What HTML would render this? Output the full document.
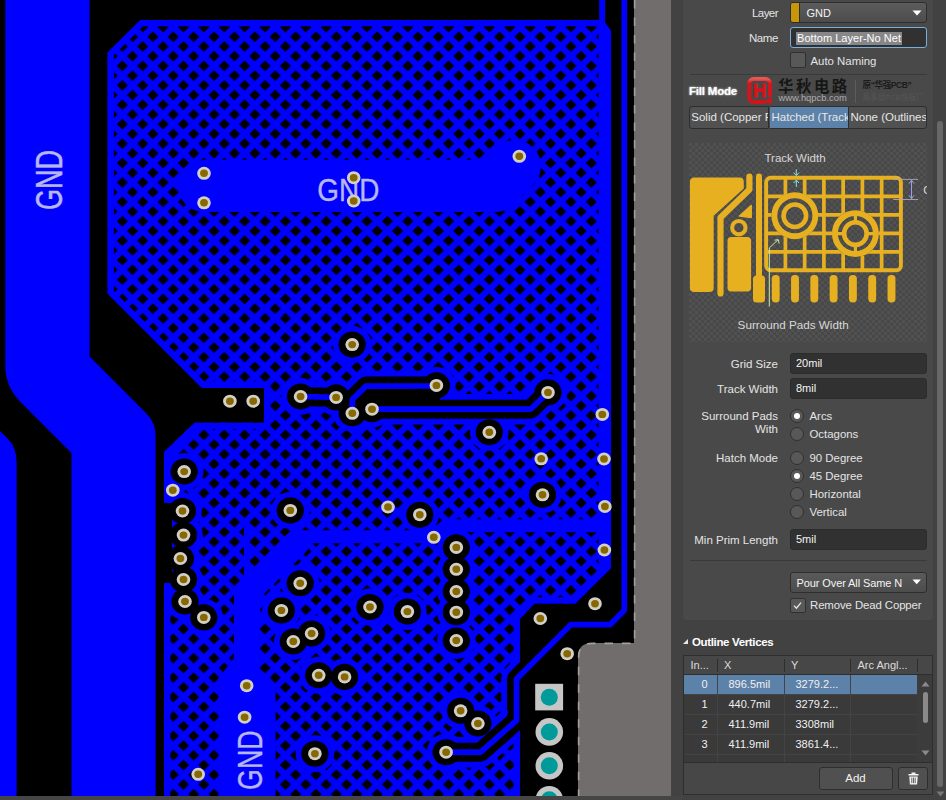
<!DOCTYPE html>
<html lang="zh"><head><meta charset="utf-8"><title>Polygon Pour Properties</title>
<style>
html,body{margin:0;padding:0}
body{width:946px;height:800px;overflow:hidden;background:#424242;position:relative;font-family:"Liberation Sans","Noto Sans CJK SC",sans-serif;font-size:11px;color:#e4e4e4}
.abs{position:absolute;white-space:nowrap}
.sec{position:absolute;left:683px;top:0;width:250px;height:620px;background:#494949;border-radius:0 0 4px 4px}
.lbl{position:absolute;white-space:nowrap;text-align:right;width:120px;left:658px;height:14px;line-height:14px;font-size:11.5px}
.inp{position:absolute;left:790px;width:137px;height:20.5px;background:#313131;border-radius:3px;box-sizing:border-box;border:1px solid #2c2c2c;line-height:19.6px;padding-left:5px;color:#f4f4f4}
.radio{position:absolute;width:12px;height:12px;border-radius:50%;background:#585858;border:1px solid #303030;left:790px}
.radio.on::after{content:"";position:absolute;left:3px;top:3px;width:6px;height:6px;border-radius:50%;background:#fff}
.rl{position:absolute;left:809.5px;white-space:nowrap;height:14px;line-height:14px;font-size:11.4px}
.chk{position:absolute;left:790.3px;width:13.4px;height:13.4px;background:#585858;border:1px solid #303030;border-radius:2px}
.hr{position:absolute;left:689.5px;width:237px;height:1px;background:#3a3a3a}
.seg{position:absolute;top:106px;height:22.5px;box-sizing:border-box;line-height:21px;overflow:hidden;white-space:nowrap;padding-left:2px;color:#e6e6e6;font-size:11.5px}
.th{position:absolute;top:0;height:19px;line-height:19px;color:#dcdcdc}
.vs{position:absolute;top:3px;width:1px;height:13px;background:#2e2e2e}
.row{position:absolute;left:0;width:233.4px;height:20px;background:#3a3a3a;border-bottom:1px solid #434343;box-sizing:border-box}
.row.sel{background:#5d82a9}
.cell{position:absolute;top:0;height:19px;line-height:19px;color:#f0f0f0;white-space:nowrap}
.cs{position:absolute;top:0;width:1px;height:20px;background:#444}
.btn{position:absolute;top:767px;height:23px;box-sizing:border-box;border:1px solid #2e2e2e;border-radius:3px;background:#505050;text-align:center;line-height:21px;color:#f2f2f2}
</style></head>
<body>
<svg id="pcb" width="683" height="800" viewBox="0 0 683 800" style="position:absolute;left:0;top:0">
<defs>
<pattern id="hatch" x="152.9" y="36.8" width="20.39" height="19.42" patternUnits="userSpaceOnUse"><rect width="20.39" height="19.42" fill="#0000ff"/><path d="M-5.60 0.00 L0.00 -5.30 L5.60 0.00 L0.00 5.30 Z M14.79 0.00 L20.39 -5.30 L25.99 0.00 L20.39 5.30 Z M-5.60 19.42 L0.00 14.12 L5.60 19.42 L0.00 24.72 Z M14.79 19.42 L20.39 14.12 L25.99 19.42 L20.39 24.72 Z M4.60 9.71 L10.20 4.41 L15.79 9.71 L10.20 15.01 Z" fill="#000"/></pattern>
<clipPath id="pc"><path d="M140.4 20.0 L603.0 20.0 L611.0 31.0 L611.0 568.0 L575.5 603.5 L534.5 603.5 L520.0 619.0 L520.0 812.0 L164.0 812.0 L164.0 452.0 L194.4 422.8 L264.0 422.8 L264.0 388.0 L202.0 388.0 L107.6 293.6 L107.6 52.4 Z"/></clipPath>
</defs>
<rect width="683" height="800" fill="#000"/>
<path d="M634 0 L671 0 L671 800 L578 800 L578 657 Q578 643 592 643 L634 643 Z" fill="#716d6c"/>
<path d="M634.6 0 L634.6 643.4 L592 643.4 Q578.6 643.4 578.6 657 L578.6 800" fill="none" stroke="#a3a1a0" stroke-width="1.6" stroke-dasharray="8.5 9"/>
<rect x="671" y="0" width="12" height="800" fill="#424242"/>
<path d="M5.3 0 L89.6 0 L89.6 356.6 L146 413 Q155.6 422.6 155.6 436 L155.6 796 L71.5 796 L71.5 453 L21 402.5 Q5.3 386.8 5.3 366 Z" fill="#0000ff"/>
<path d="M0 431 L8 439 Q16.6 447.6 16.6 462 L16.6 796 L0 796 Z" fill="#0000ff"/>
<rect x="599.2" y="0" width="5.9" height="24" fill="#0000ff"/>
<path d="M140.4 20.0 L603.0 20.0 L611.0 31.0 L611.0 568.0 L575.5 603.5 L534.5 603.5 L520.0 619.0 L520.0 812.0 L164.0 812.0 L164.0 452.0 L194.4 422.8 L264.0 422.8 L264.0 388.0 L202.0 388.0 L107.6 293.6 L107.6 52.4 Z" fill="url(#hatch)"/>
<g clip-path="url(#pc)">
<path d="M140.4 20.0 L603.0 20.0 L611.0 31.0 L611.0 568.0 L575.5 603.5 L534.5 603.5 L520.0 619.0 L520.0 812.0 L164.0 812.0 L164.0 452.0 L194.4 422.8 L264.0 422.8 L264.0 388.0 L202.0 388.0 L107.6 293.6 L107.6 52.4 Z" fill="none" stroke="#0000ff" stroke-width="12.6" stroke-linejoin="miter"/>
<rect x="598.6" y="20" width="13" height="560" fill="#0000ff"/>
<path d="M204 186 L495 186 L515 166" fill="none" stroke="#0000ff" stroke-width="52" stroke-linecap="round" stroke-linejoin="round"/>
<path d="M291 536.8 L433 536.8 L446 525.7 L604 525.7" fill="none" stroke="#0000ff" stroke-width="13" stroke-linejoin="round"/>
<path d="M247 690 L247 592.5 L296.5 543" fill="none" stroke="#0000ff" stroke-width="26" stroke-linejoin="round" stroke-linecap="round"/>
<path d="M247 527 L247 590" fill="none" stroke="#0000ff" stroke-width="6"/>
<path d="M234 658 L218.5 678 L218.5 800 L275.6 800 L275.6 692 L259.5 668 Z" fill="#0000ff"/>
<circle cx="172.8" cy="490.2" r="12" fill="#0000ff"/>
<ellipse cx="352.2" cy="344.6" rx="19.3" ry="18.5" fill="#0000ff"/>
<ellipse cx="300.6" cy="396.5" rx="19.3" ry="18.5" fill="#0000ff"/>
<ellipse cx="336.1" cy="397.4" rx="19.3" ry="18.5" fill="#0000ff"/>
<ellipse cx="352.3" cy="413.3" rx="19.3" ry="18.5" fill="#0000ff"/>
<ellipse cx="372" cy="409.2" rx="19.3" ry="18.5" fill="#0000ff"/>
<ellipse cx="436.4" cy="385.4" rx="19.3" ry="18.5" fill="#0000ff"/>
<ellipse cx="548" cy="392.4" rx="19.3" ry="18.5" fill="#0000ff"/>
<ellipse cx="489.3" cy="432.3" rx="19.3" ry="18.5" fill="#0000ff"/>
<ellipse cx="542.5" cy="494.8" rx="19.3" ry="18.5" fill="#0000ff"/>
<ellipse cx="184.2" cy="471.6" rx="19.3" ry="18.5" fill="#0000ff"/>
<ellipse cx="182.5" cy="511" rx="19.3" ry="18.5" fill="#0000ff"/>
<ellipse cx="183.5" cy="535.1" rx="19.3" ry="18.5" fill="#0000ff"/>
<ellipse cx="180.4" cy="558.5" rx="19.3" ry="18.5" fill="#0000ff"/>
<ellipse cx="183.5" cy="579.5" rx="19.3" ry="18.5" fill="#0000ff"/>
<ellipse cx="185" cy="601.5" rx="19.3" ry="18.5" fill="#0000ff"/>
<ellipse cx="203.8" cy="617.4" rx="19.3" ry="18.5" fill="#0000ff"/>
<ellipse cx="290.3" cy="510.4" rx="19.3" ry="18.5" fill="#0000ff"/>
<ellipse cx="300.2" cy="583.3" rx="19.3" ry="18.5" fill="#0000ff"/>
<ellipse cx="281.4" cy="610.4" rx="19.3" ry="18.5" fill="#0000ff"/>
<ellipse cx="370" cy="607" rx="19.3" ry="18.5" fill="#0000ff"/>
<ellipse cx="311.6" cy="633.5" rx="19.3" ry="18.5" fill="#0000ff"/>
<ellipse cx="293.3" cy="641.5" rx="19.3" ry="18.5" fill="#0000ff"/>
<ellipse cx="318.7" cy="675.3" rx="19.3" ry="18.5" fill="#0000ff"/>
<ellipse cx="344.6" cy="676.9" rx="19.3" ry="18.5" fill="#0000ff"/>
<ellipse cx="314.9" cy="753.7" rx="19.3" ry="18.5" fill="#0000ff"/>
<ellipse cx="419.8" cy="514.7" rx="19.3" ry="18.5" fill="#0000ff"/>
<ellipse cx="407.4" cy="611.6" rx="19.3" ry="18.5" fill="#0000ff"/>
<ellipse cx="456.3" cy="547.4" rx="19.3" ry="18.5" fill="#0000ff"/>
<ellipse cx="456.3" cy="569.3" rx="19.3" ry="18.5" fill="#0000ff"/>
<ellipse cx="456.3" cy="591.5" rx="19.3" ry="18.5" fill="#0000ff"/>
<ellipse cx="456.3" cy="612.2" rx="19.3" ry="18.5" fill="#0000ff"/>
<ellipse cx="456.3" cy="640.5" rx="19.3" ry="18.5" fill="#0000ff"/>
<ellipse cx="460.6" cy="710.8" rx="19.3" ry="18.5" fill="#0000ff"/>
<ellipse cx="477.9" cy="723.5" rx="19.3" ry="18.5" fill="#0000ff"/>
<ellipse cx="446.1" cy="752.2" rx="19.3" ry="18.5" fill="#0000ff"/>
<path d="M300.6 396.5 L336.1 397.4" fill="none" stroke="#0000ff" stroke-width="30.4" stroke-linecap="round" stroke-linejoin="round"/>
<path d="M352.3 413.3 L352.3 399.5 L366.0 386.1 L436.4 386.0" fill="none" stroke="#0000ff" stroke-width="30.4" stroke-linecap="round" stroke-linejoin="round"/>
<path d="M372.0 409.2 L530.6 409.2 L548.0 392.4" fill="none" stroke="#0000ff" stroke-width="30.4" stroke-linecap="round" stroke-linejoin="round"/>
<path d="M446.1 752.2 L480.6 752.2 L516.5 720.5 L516.5 679.0 L570.7 624.7 L610.0 624.7 L624.3 610.3 L624.3 -5.0" fill="none" stroke="#0000ff" stroke-width="30.4" stroke-linecap="round" stroke-linejoin="round"/>
<rect x="160" y="503" width="12" height="80" fill="#000"/>
<path d="M367 385 L440 385 L440 409 L372 409 L355 405 Z" fill="#000"/>
<ellipse cx="352.2" cy="344.6" rx="13.6" ry="13.05" fill="#000"/>
<ellipse cx="300.6" cy="396.5" rx="13.6" ry="13.05" fill="#000"/>
<ellipse cx="336.1" cy="397.4" rx="13.6" ry="13.05" fill="#000"/>
<ellipse cx="352.3" cy="413.3" rx="13.6" ry="13.05" fill="#000"/>
<ellipse cx="372" cy="409.2" rx="13.6" ry="13.05" fill="#000"/>
<ellipse cx="436.4" cy="385.4" rx="13.6" ry="13.05" fill="#000"/>
<ellipse cx="548" cy="392.4" rx="13.6" ry="13.05" fill="#000"/>
<ellipse cx="489.3" cy="432.3" rx="13.6" ry="13.05" fill="#000"/>
<ellipse cx="542.5" cy="494.8" rx="13.6" ry="13.05" fill="#000"/>
<ellipse cx="184.2" cy="471.6" rx="13.6" ry="13.05" fill="#000"/>
<ellipse cx="182.5" cy="511" rx="13.6" ry="13.05" fill="#000"/>
<ellipse cx="183.5" cy="535.1" rx="13.6" ry="13.05" fill="#000"/>
<ellipse cx="180.4" cy="558.5" rx="13.6" ry="13.05" fill="#000"/>
<ellipse cx="183.5" cy="579.5" rx="13.6" ry="13.05" fill="#000"/>
<ellipse cx="185" cy="601.5" rx="13.6" ry="13.05" fill="#000"/>
<ellipse cx="203.8" cy="617.4" rx="13.6" ry="13.05" fill="#000"/>
<ellipse cx="290.3" cy="510.4" rx="13.6" ry="13.05" fill="#000"/>
<ellipse cx="300.2" cy="583.3" rx="13.6" ry="13.05" fill="#000"/>
<ellipse cx="281.4" cy="610.4" rx="13.6" ry="13.05" fill="#000"/>
<ellipse cx="370" cy="607" rx="13.6" ry="13.05" fill="#000"/>
<ellipse cx="311.6" cy="633.5" rx="13.6" ry="13.05" fill="#000"/>
<ellipse cx="293.3" cy="641.5" rx="13.6" ry="13.05" fill="#000"/>
<ellipse cx="318.7" cy="675.3" rx="13.6" ry="13.05" fill="#000"/>
<ellipse cx="344.6" cy="676.9" rx="13.6" ry="13.05" fill="#000"/>
<ellipse cx="314.9" cy="753.7" rx="13.6" ry="13.05" fill="#000"/>
<ellipse cx="419.8" cy="514.7" rx="13.6" ry="13.05" fill="#000"/>
<ellipse cx="407.4" cy="611.6" rx="13.6" ry="13.05" fill="#000"/>
<ellipse cx="456.3" cy="547.4" rx="13.6" ry="13.05" fill="#000"/>
<ellipse cx="456.3" cy="569.3" rx="13.6" ry="13.05" fill="#000"/>
<ellipse cx="456.3" cy="591.5" rx="13.6" ry="13.05" fill="#000"/>
<ellipse cx="456.3" cy="612.2" rx="13.6" ry="13.05" fill="#000"/>
<ellipse cx="456.3" cy="640.5" rx="13.6" ry="13.05" fill="#000"/>
<ellipse cx="460.6" cy="710.8" rx="13.6" ry="13.05" fill="#000"/>
<ellipse cx="477.9" cy="723.5" rx="13.6" ry="13.05" fill="#000"/>
<ellipse cx="446.1" cy="752.2" rx="13.6" ry="13.05" fill="#000"/>
<path d="M300.6 396.5 L336.1 397.4" fill="none" stroke="#000" stroke-width="19" stroke-linecap="round" stroke-linejoin="round"/>
<path d="M352.3 413.3 L352.3 399.5 L366.0 386.1 L436.4 386.0" fill="none" stroke="#000" stroke-width="19" stroke-linecap="round" stroke-linejoin="round"/>
<path d="M372.0 409.2 L530.6 409.2 L548.0 392.4" fill="none" stroke="#000" stroke-width="19" stroke-linecap="round" stroke-linejoin="round"/>
<path d="M446.1 752.2 L480.6 752.2 L516.5 720.5 L516.5 679.0 L570.7 624.7 L610.0 624.7 L624.3 610.3 L624.3 -5.0" fill="none" stroke="#000" stroke-width="19" stroke-linecap="round" stroke-linejoin="round"/>
</g>
<path d="M300.6 396.5 L336.1 397.4" fill="none" stroke="#0000ff" stroke-width="5.7" stroke-linecap="round" stroke-linejoin="round"/>
<path d="M352.3 413.3 L352.3 399.5 L366.0 386.1 L436.4 386.0" fill="none" stroke="#0000ff" stroke-width="5.7" stroke-linecap="round" stroke-linejoin="round"/>
<path d="M372.0 409.2 L530.6 409.2 L548.0 392.4" fill="none" stroke="#0000ff" stroke-width="5.7" stroke-linecap="round" stroke-linejoin="round"/>
<path d="M446.1 752.2 L480.6 752.2 L516.5 720.5 L516.5 679.0 L570.7 624.7 L610.0 624.7 L624.3 610.3 L624.3 -5.0" fill="none" stroke="#0000ff" stroke-width="5.7" stroke-linecap="round" stroke-linejoin="round"/>
<text x="348.3" y="200.6" font-family="Liberation Sans, sans-serif" font-size="31.6" fill="#b6b6f2" stroke="#b6b6f2" stroke-width="0.4" text-anchor="middle" textLength="62" lengthAdjust="spacingAndGlyphs">GND</text>
<text transform="translate(61.8 180) rotate(-90)" font-family="Liberation Sans, sans-serif" font-size="37.2" fill="#b6b6f2" stroke="#b6b6f2" stroke-width="0.5" text-anchor="middle" textLength="60" lengthAdjust="spacingAndGlyphs">GND</text>
<text transform="translate(261.8 760.2) rotate(-90)" font-family="Liberation Sans, sans-serif" font-size="35.6" fill="#b6b6f2" stroke="#b6b6f2" stroke-width="0.4" text-anchor="middle" textLength="59.5" lengthAdjust="spacingAndGlyphs">GND</text>
<path d="M495.3 721.2 L505.2 712.4" stroke="#0000ff" stroke-width="5.6" stroke-linecap="round"/>
<ellipse cx="204" cy="173.3" rx="6.8" ry="6.5" fill="#d1cfc7"/><ellipse cx="204" cy="173.3" rx="3.9" ry="3.7" fill="#876700"/>
<ellipse cx="204" cy="202.8" rx="6.8" ry="6.5" fill="#d1cfc7"/><ellipse cx="204" cy="202.8" rx="3.9" ry="3.7" fill="#876700"/>
<ellipse cx="353.7" cy="177.7" rx="6.8" ry="6.5" fill="#d1cfc7"/><ellipse cx="353.7" cy="177.7" rx="3.9" ry="3.7" fill="#876700"/>
<ellipse cx="353.7" cy="201" rx="6.8" ry="6.5" fill="#d1cfc7"/><ellipse cx="353.7" cy="201" rx="3.9" ry="3.7" fill="#876700"/>
<ellipse cx="519.3" cy="156.3" rx="6.8" ry="6.5" fill="#d1cfc7"/><ellipse cx="519.3" cy="156.3" rx="3.9" ry="3.7" fill="#876700"/>
<ellipse cx="229.9" cy="401.2" rx="6.8" ry="6.5" fill="#d1cfc7"/><ellipse cx="229.9" cy="401.2" rx="3.9" ry="3.7" fill="#876700"/>
<ellipse cx="253.2" cy="401.2" rx="6.8" ry="6.5" fill="#d1cfc7"/><ellipse cx="253.2" cy="401.2" rx="3.9" ry="3.7" fill="#876700"/>
<ellipse cx="352.2" cy="344.6" rx="6.8" ry="6.5" fill="#d1cfc7"/><ellipse cx="352.2" cy="344.6" rx="3.9" ry="3.7" fill="#876700"/>
<ellipse cx="300.6" cy="396.5" rx="6.8" ry="6.5" fill="#d1cfc7"/><ellipse cx="300.6" cy="396.5" rx="3.9" ry="3.7" fill="#876700"/>
<ellipse cx="336.1" cy="397.4" rx="6.8" ry="6.5" fill="#d1cfc7"/><ellipse cx="336.1" cy="397.4" rx="3.9" ry="3.7" fill="#876700"/>
<ellipse cx="352.3" cy="413.3" rx="6.8" ry="6.5" fill="#d1cfc7"/><ellipse cx="352.3" cy="413.3" rx="3.9" ry="3.7" fill="#876700"/>
<ellipse cx="372" cy="409.2" rx="6.8" ry="6.5" fill="#d1cfc7"/><ellipse cx="372" cy="409.2" rx="3.9" ry="3.7" fill="#876700"/>
<ellipse cx="436.4" cy="385.4" rx="6.8" ry="6.5" fill="#d1cfc7"/><ellipse cx="436.4" cy="385.4" rx="3.9" ry="3.7" fill="#876700"/>
<ellipse cx="548" cy="392.4" rx="6.8" ry="6.5" fill="#d1cfc7"/><ellipse cx="548" cy="392.4" rx="3.9" ry="3.7" fill="#876700"/>
<ellipse cx="489.3" cy="432.3" rx="6.8" ry="6.5" fill="#d1cfc7"/><ellipse cx="489.3" cy="432.3" rx="3.9" ry="3.7" fill="#876700"/>
<ellipse cx="541.2" cy="458.8" rx="6.8" ry="6.5" fill="#d1cfc7"/><ellipse cx="541.2" cy="458.8" rx="3.9" ry="3.7" fill="#876700"/>
<ellipse cx="602.3" cy="414.4" rx="6.8" ry="6.5" fill="#d1cfc7"/><ellipse cx="602.3" cy="414.4" rx="3.9" ry="3.7" fill="#876700"/>
<ellipse cx="604" cy="459" rx="6.8" ry="6.5" fill="#d1cfc7"/><ellipse cx="604" cy="459" rx="3.9" ry="3.7" fill="#876700"/>
<ellipse cx="604.9" cy="506.5" rx="6.8" ry="6.5" fill="#d1cfc7"/><ellipse cx="604.9" cy="506.5" rx="3.9" ry="3.7" fill="#876700"/>
<ellipse cx="604.4" cy="550" rx="6.8" ry="6.5" fill="#d1cfc7"/><ellipse cx="604.4" cy="550" rx="3.9" ry="3.7" fill="#876700"/>
<ellipse cx="542.5" cy="494.8" rx="6.8" ry="6.5" fill="#d1cfc7"/><ellipse cx="542.5" cy="494.8" rx="3.9" ry="3.7" fill="#876700"/>
<ellipse cx="184.2" cy="471.6" rx="6.8" ry="6.5" fill="#d1cfc7"/><ellipse cx="184.2" cy="471.6" rx="3.9" ry="3.7" fill="#876700"/>
<ellipse cx="172.8" cy="490.2" rx="6.8" ry="6.5" fill="#d1cfc7"/><ellipse cx="172.8" cy="490.2" rx="3.9" ry="3.7" fill="#876700"/>
<ellipse cx="182.5" cy="511" rx="6.8" ry="6.5" fill="#d1cfc7"/><ellipse cx="182.5" cy="511" rx="3.9" ry="3.7" fill="#876700"/>
<ellipse cx="183.5" cy="535.1" rx="6.8" ry="6.5" fill="#d1cfc7"/><ellipse cx="183.5" cy="535.1" rx="3.9" ry="3.7" fill="#876700"/>
<ellipse cx="180.4" cy="558.5" rx="6.8" ry="6.5" fill="#d1cfc7"/><ellipse cx="180.4" cy="558.5" rx="3.9" ry="3.7" fill="#876700"/>
<ellipse cx="183.5" cy="579.5" rx="6.8" ry="6.5" fill="#d1cfc7"/><ellipse cx="183.5" cy="579.5" rx="3.9" ry="3.7" fill="#876700"/>
<ellipse cx="185" cy="601.5" rx="6.8" ry="6.5" fill="#d1cfc7"/><ellipse cx="185" cy="601.5" rx="3.9" ry="3.7" fill="#876700"/>
<ellipse cx="203.8" cy="617.4" rx="6.8" ry="6.5" fill="#d1cfc7"/><ellipse cx="203.8" cy="617.4" rx="3.9" ry="3.7" fill="#876700"/>
<ellipse cx="290.3" cy="510.4" rx="6.8" ry="6.5" fill="#d1cfc7"/><ellipse cx="290.3" cy="510.4" rx="3.9" ry="3.7" fill="#876700"/>
<ellipse cx="300.2" cy="583.3" rx="6.8" ry="6.5" fill="#d1cfc7"/><ellipse cx="300.2" cy="583.3" rx="3.9" ry="3.7" fill="#876700"/>
<ellipse cx="281.4" cy="610.4" rx="6.8" ry="6.5" fill="#d1cfc7"/><ellipse cx="281.4" cy="610.4" rx="3.9" ry="3.7" fill="#876700"/>
<ellipse cx="370" cy="607" rx="6.8" ry="6.5" fill="#d1cfc7"/><ellipse cx="370" cy="607" rx="3.9" ry="3.7" fill="#876700"/>
<ellipse cx="311.6" cy="633.5" rx="6.8" ry="6.5" fill="#d1cfc7"/><ellipse cx="311.6" cy="633.5" rx="3.9" ry="3.7" fill="#876700"/>
<ellipse cx="293.3" cy="641.5" rx="6.8" ry="6.5" fill="#d1cfc7"/><ellipse cx="293.3" cy="641.5" rx="3.9" ry="3.7" fill="#876700"/>
<ellipse cx="318.7" cy="675.3" rx="6.8" ry="6.5" fill="#d1cfc7"/><ellipse cx="318.7" cy="675.3" rx="3.9" ry="3.7" fill="#876700"/>
<ellipse cx="344.6" cy="676.9" rx="6.8" ry="6.5" fill="#d1cfc7"/><ellipse cx="344.6" cy="676.9" rx="3.9" ry="3.7" fill="#876700"/>
<ellipse cx="246.7" cy="685.7" rx="6.8" ry="6.5" fill="#d1cfc7"/><ellipse cx="246.7" cy="685.7" rx="3.9" ry="3.7" fill="#876700"/>
<ellipse cx="244.6" cy="717.2" rx="6.8" ry="6.5" fill="#d1cfc7"/><ellipse cx="244.6" cy="717.2" rx="3.9" ry="3.7" fill="#876700"/>
<ellipse cx="314.9" cy="753.7" rx="6.8" ry="6.5" fill="#d1cfc7"/><ellipse cx="314.9" cy="753.7" rx="3.9" ry="3.7" fill="#876700"/>
<ellipse cx="198.2" cy="774.3" rx="6.8" ry="6.5" fill="#d1cfc7"/><ellipse cx="198.2" cy="774.3" rx="3.9" ry="3.7" fill="#876700"/>
<ellipse cx="388" cy="507" rx="6.8" ry="6.5" fill="#d1cfc7"/><ellipse cx="388" cy="507" rx="3.9" ry="3.7" fill="#876700"/>
<ellipse cx="419.8" cy="514.7" rx="6.8" ry="6.5" fill="#d1cfc7"/><ellipse cx="419.8" cy="514.7" rx="3.9" ry="3.7" fill="#876700"/>
<ellipse cx="433.8" cy="537.3" rx="6.8" ry="6.5" fill="#d1cfc7"/><ellipse cx="433.8" cy="537.3" rx="3.9" ry="3.7" fill="#876700"/>
<ellipse cx="407.4" cy="611.6" rx="6.8" ry="6.5" fill="#d1cfc7"/><ellipse cx="407.4" cy="611.6" rx="3.9" ry="3.7" fill="#876700"/>
<ellipse cx="456.3" cy="547.4" rx="6.8" ry="6.5" fill="#d1cfc7"/><ellipse cx="456.3" cy="547.4" rx="3.9" ry="3.7" fill="#876700"/>
<ellipse cx="456.3" cy="569.3" rx="6.8" ry="6.5" fill="#d1cfc7"/><ellipse cx="456.3" cy="569.3" rx="3.9" ry="3.7" fill="#876700"/>
<ellipse cx="456.3" cy="591.5" rx="6.8" ry="6.5" fill="#d1cfc7"/><ellipse cx="456.3" cy="591.5" rx="3.9" ry="3.7" fill="#876700"/>
<ellipse cx="456.3" cy="612.2" rx="6.8" ry="6.5" fill="#d1cfc7"/><ellipse cx="456.3" cy="612.2" rx="3.9" ry="3.7" fill="#876700"/>
<ellipse cx="456.3" cy="640.5" rx="6.8" ry="6.5" fill="#d1cfc7"/><ellipse cx="456.3" cy="640.5" rx="3.9" ry="3.7" fill="#876700"/>
<ellipse cx="460.6" cy="710.8" rx="6.8" ry="6.5" fill="#d1cfc7"/><ellipse cx="460.6" cy="710.8" rx="3.9" ry="3.7" fill="#876700"/>
<ellipse cx="477.9" cy="723.5" rx="6.8" ry="6.5" fill="#d1cfc7"/><ellipse cx="477.9" cy="723.5" rx="3.9" ry="3.7" fill="#876700"/>
<ellipse cx="446.1" cy="752.2" rx="6.8" ry="6.5" fill="#d1cfc7"/><ellipse cx="446.1" cy="752.2" rx="3.9" ry="3.7" fill="#876700"/>
<ellipse cx="540.3" cy="618.5" rx="6.8" ry="6.5" fill="#d1cfc7"/><ellipse cx="540.3" cy="618.5" rx="3.9" ry="3.7" fill="#876700"/>
<ellipse cx="595" cy="603.7" rx="6.8" ry="6.5" fill="#d1cfc7"/><ellipse cx="595" cy="603.7" rx="3.9" ry="3.7" fill="#876700"/>
<ellipse cx="567.2" cy="653.7" rx="6.8" ry="6.5" fill="#d1cfc7"/><ellipse cx="567.2" cy="653.7" rx="3.9" ry="3.7" fill="#876700"/>
<rect x="535.2" y="683.8" width="27.9" height="26.6" fill="#c6c6c6"/>
<circle cx="549.3" cy="697.3" r="8.5" fill="#009a9a"/>
<circle cx="549.3" cy="731.9" r="13.8" fill="#c6c6c6"/><circle cx="549.3" cy="731.9" r="8.5" fill="#009a9a"/>
<circle cx="549.3" cy="765.8" r="13.8" fill="#c6c6c6"/><circle cx="549.3" cy="765.8" r="8.5" fill="#009a9a"/>
<circle cx="549.3" cy="799.8" r="13.8" fill="#c6c6c6"/><circle cx="549.3" cy="799.8" r="8.5" fill="#009a9a"/>
<rect x="0" y="796" width="683" height="4" fill="#454545"/>
</svg>
<div class="sec"></div>
<div class="lbl" style="top:6px;letter-spacing:-0.55px">Layer</div>
<div class="abs" style="left:790px;top:2px;width:137px;height:21px;box-sizing:border-box;border:1px solid #2e2e2e;border-radius:3px;background:linear-gradient(#5c5c5c,#4c4c4c);overflow:hidden"><div style="position:absolute;left:0;top:0;width:8px;height:100%;background:#c8960a;border-right:1px solid #2e2e2e"></div><span style="position:absolute;left:15.5px;top:2.5px;line-height:14px;color:#f4f4f4">GND</span><svg style="position:absolute;left:121px;top:6.5px" width="10" height="6" viewBox="0 0 10 6"><path d="M0.5 0.5 L9.5 0.5 L5 5.5 Z" fill="#fff"/></svg></div>
<div class="lbl" style="top:30.5px;letter-spacing:-0.4px">Name</div>
<div class="abs" style="left:790px;top:27px;width:137px;height:21px;box-sizing:border-box;border:1px solid #79aee0;border-radius:3px;background:#313131"><span style="position:absolute;left:5px;top:4px;height:12.5px;line-height:12.5px;background:#878787;color:#fff;padding:0 1px;letter-spacing:0.04px">Bottom Layer-No Net</span></div>
<div class="chk" style="top:52.4px"></div>
<div class="rl" style="left:810.5px;top:54px">Auto Naming</div>
<div class="hr" style="top:74px"></div>
<div class="abs" style="left:689px;top:83.5px;font-weight:bold;font-size:11.5px;color:#fff;text-shadow:0 0 2px #fff;line-height:14px;letter-spacing:-0.2px">Fill Mode</div>
<svg class="abs" style="left:744px;top:74px" width="32" height="32" viewBox="744 74 32 32"><defs><linearGradient id="lg" x1="0" y1="0" x2="0" y2="1"><stop offset="0" stop-color="#e8584f"/><stop offset="0.18" stop-color="#d8141c"/><stop offset="1" stop-color="#d0141b"/></linearGradient></defs><rect x="749.2" y="79" width="20.8" height="23" rx="4.6" fill="none" stroke="url(#lg)" stroke-width="4"/><rect x="766" y="97" width="8" height="8" fill="#494949"/><circle cx="769.3" cy="101" r="2.8" fill="#d4141c"/><text x="759.6" y="97.3" font-family="Liberation Sans, sans-serif" font-weight="bold" font-size="18.6" text-anchor="middle" fill="#d4141c" stroke="#d4141c" stroke-width="0.9" textLength="13.4" lengthAdjust="spacingAndGlyphs">H</text></svg>
<div class="abs" style="left:778px;top:78.3px;font-size:15.4px;line-height:17px;font-weight:bold;color:#161616;font-family:'Liberation Sans','Noto Sans CJK SC',sans-serif;letter-spacing:2.55px">华秋电路</div>
<div class="abs" style="left:778.5px;top:92.4px;font-size:9.4px;line-height:11px;color:#adadad;letter-spacing:0px">www.hqpcb.com</div>
<div class="abs" style="left:855px;top:80px;width:1px;height:23px;background:#5c5c5c"></div>
<div class="abs" style="left:862.5px;top:80px;font-size:8.6px;line-height:11px;font-weight:bold;color:#1c1c1c;letter-spacing:-0.45px">原“华强PCB”</div>
<div class="abs" style="left:862.5px;top:92px;font-size:7.6px;line-height:11px;color:#575757">高多层PCB快板厂</div>
<div class="seg" style="left:688.7px;width:80.8px;background:#515151;border:1px solid #2e2e2e;border-radius:3px 0 0 3px;padding-left:1.6px">Solid (Copper F</div>
<div class="seg" style="left:769.5px;width:78px;background:#5d82a9;border-top:1px solid #2e2e2e;border-bottom:1px solid #2e2e2e">Hatched (Track</div>
<div class="seg" style="left:847.5px;width:79.5px;background:#515151;border:1px solid #2e2e2e;border-radius:0 3px 3px 0">None (Outlines</div>
<svg class="abs" style="left:689px;top:143px" width="238" height="199" viewBox="689 143 238 199">
<defs><pattern id="chk" x="689" y="143" width="6" height="6" patternUnits="userSpaceOnUse"><rect width="6" height="6" fill="#484848"/><rect width="3" height="3" fill="#515151"/><rect x="3" y="3" width="3" height="3" fill="#515151"/></pattern></defs>
<rect x="689" y="143" width="238" height="199" fill="url(#chk)"/>
<path d="M694.6 177.6 L739.4 177.6 Q743.8 177.6 743.8 182 L743.8 188.6 L713.7 215.8 L713.7 287.4 Q713.7 292 709.1 292 L694.5 292 Q689.9 292 689.9 287.4 L689.9 182.2 Q689.9 177.6 694.6 177.6 Z" fill="#e6b020"/>
<path d="M749.4 176.6 L749.4 189.5 L720.5 217.5 L720.5 293.4" fill="none" stroke="#e6b020" stroke-width="6.2" stroke-linecap="round" stroke-linejoin="round"/>
<path d="M759 176.6 L759 280" fill="none" stroke="#e6b020" stroke-width="6" stroke-linecap="round"/>
<rect x="753" y="275.5" width="12" height="27" rx="3.5" fill="#e6b020"/>
<path d="M751.2 205.5 L751.2 217.5 L739.5 216 Z" fill="#e6b020" stroke="#e6b020" stroke-width="1.5" stroke-linejoin="round"/>
<circle cx="738.85" cy="227.65" r="6.7" fill="none" stroke="#e6b020" stroke-width="4.1"/>
<rect x="727.5" y="237" width="23.6" height="54.4" rx="4" fill="#e6b020"/>
<path d="M785.40 177.8 L785.40 270.3 M804.65 177.8 L804.65 270.3 M823.90 177.8 L823.90 270.3 M843.15 177.8 L843.15 270.3 M862.40 177.8 L862.40 270.3 M881.65 177.8 L881.65 270.3 M766.15 196.30 L900.90 196.30 M766.15 214.80 L900.90 214.80 M766.15 233.30 L900.90 233.30 M766.15 251.80 L900.90 251.80 " stroke="#e6b020" stroke-width="3.7" fill="none"/>
<rect x="766.15" y="177.8" width="134.75" height="92.50" rx="4.5" fill="none" stroke="#e6b020" stroke-width="3.9"/>
<circle cx="794.85" cy="215.75" r="23.4" fill="url(#chk)"/>
<circle cx="794.85" cy="215.75" r="20.5" fill="none" stroke="#e6b020" stroke-width="5.9"/>
<circle cx="794.85" cy="215.75" r="11.3" fill="none" stroke="#e6b020" stroke-width="4.6"/>
<circle cx="855.4" cy="233.6" r="23.4" fill="url(#chk)"/>
<circle cx="855.4" cy="233.6" r="20.5" fill="none" stroke="#e6b020" stroke-width="5.9"/>
<circle cx="855.4" cy="233.6" r="11.3" fill="none" stroke="#e6b020" stroke-width="4.6"/>
<path d="M855.4 213.6 L855.4 222.6 M855.4 244.6 L855.4 253.6 M835.4 233.6 L844.4 233.6 M866.4 233.6 L875.4 233.6" stroke="#e6b020" stroke-width="3.2"/>
<rect x="771.75" y="274.9" width="7.9" height="27.5" rx="3.6" fill="#e6b020"/>
<rect x="791.05" y="274.9" width="7.9" height="27.5" rx="3.6" fill="#e6b020"/>
<rect x="810.35" y="274.9" width="7.9" height="27.5" rx="3.6" fill="#e6b020"/>
<rect x="829.65" y="274.9" width="7.9" height="27.5" rx="3.6" fill="#e6b020"/>
<rect x="848.95" y="274.9" width="7.9" height="27.5" rx="3.6" fill="#e6b020"/>
<rect x="868.25" y="274.9" width="7.9" height="27.5" rx="3.6" fill="#e6b020"/>
<rect x="887.55" y="274.9" width="7.9" height="27.5" rx="3.6" fill="#e6b020"/>
<path d="M796.3 169.2 L796.3 175.4 M793.6 172.6 L796.3 175.5 L799 172.6 M796.3 187 L796.3 180.2 M793.6 183 L796.3 180.1 L799 183" stroke="#86e6e6" stroke-width="1" fill="none"/>
<path d="M769.3 306.5 L769.3 248 L778 239.8 M774.6 240.2 L778.2 239.6 L779.2 243.6" stroke="#cdeaa6" stroke-width="1" fill="none"/>
<path d="M893.2 179.4 L918 179.4 M893.2 199.5 L918 199.5" stroke="#a9a9b4" stroke-width="0.9" fill="none"/>
<path d="M911.5 180.4 L911.5 198.5 M909 183.6 L911.5 180.2 L914 183.6 M909 195.3 L911.5 198.7 L914 195.3" stroke="#9c9cf2" stroke-width="1" fill="none"/>
<text x="764.4" y="161.5" font-family="Liberation Sans, sans-serif" font-size="11.4" fill="#d8d8d8" textLength="61.3" lengthAdjust="spacingAndGlyphs">Track Width</text>
<text x="737.6" y="328.8" font-family="Liberation Sans, sans-serif" font-size="11.4" fill="#d8d8d8" textLength="111.1" lengthAdjust="spacingAndGlyphs">Surround Pads Width</text>
<text x="923.2" y="194.4" font-family="Liberation Sans, sans-serif" font-size="11.4" fill="#d8d8d8">Grid Size</text>
</svg>
<div class="lbl" style="top:357px">Grid Size</div><div class="inp" style="top:353.1px">20mil</div>
<div class="lbl" style="top:382px">Track Width</div><div class="inp" style="top:378.2px">8mil</div>
<div class="lbl" style="top:409px">Surround Pads</div><div class="lbl" style="top:422px">With</div>
<div class="radio on" style="top:408.6px"></div><div class="rl" style="top:408.8px">Arcs</div>
<div class="radio" style="top:426.6px"></div><div class="rl" style="top:426.8px">Octagons</div>
<div class="lbl" style="top:451px">Hatch Mode</div>
<div class="radio" style="top:450.6px"></div><div class="rl" style="top:450.8px">90 Degree</div>
<div class="radio on" style="top:468.6px"></div><div class="rl" style="top:468.8px">45 Degree</div>
<div class="radio" style="top:486.6px"></div><div class="rl" style="top:486.8px">Horizontal</div>
<div class="radio" style="top:504.6px"></div><div class="rl" style="top:504.8px">Vertical</div>
<div class="lbl" style="top:533px">Min Prim Length</div><div class="inp" style="top:529.2px">5mil</div>
<div class="hr" style="top:560px"></div>
<div class="abs" style="left:790px;top:572px;width:137px;height:20.6px;box-sizing:border-box;border:1px solid #2e2e2e;border-radius:3px;background:linear-gradient(#5a5a5a,#4c4c4c);overflow:hidden"><span style="position:absolute;left:5.5px;top:2.5px;line-height:14px;color:#f4f4f4;letter-spacing:-0.1px">Pour Over All Same N</span><svg style="position:absolute;left:121px;top:6px" width="9.4" height="5.6" viewBox="0 0 10 6"><path d="M0.5 0.5 L9.5 0.5 L5 5.5 Z" fill="#fff"/></svg></div>
<div class="chk" style="top:597.6px"><svg width="13" height="13" viewBox="0 0 13 13" style="position:absolute;left:0;top:0"><path d="M3 6.6 L5.4 9.2 L10 3.6" fill="none" stroke="#e8e8e8" stroke-width="1.3"/></svg></div>
<div class="rl" style="left:810px;top:597.6px;letter-spacing:-0.1px">Remove Dead Copper</div>
<svg class="abs" style="left:682.3px;top:638px" width="7" height="7" viewBox="0 0 7 7"><path d="M6 1 L6 6 L1 6 Z" fill="#e8e8e8"/></svg>
<div class="abs" style="left:692px;top:635px;font-weight:bold;color:#fff;line-height:14px;letter-spacing:-0.35px;font-size:11.5px">Outline Vertices</div>
<div class="abs" style="left:683px;top:654.5px;width:249.5px;height:140.5px;box-sizing:border-box;border:1px solid #2e2e2e;background:#474747;overflow:hidden"><div style="position:absolute;left:0;top:0;width:248px;height:18.3px;background:#474747;border-bottom:1px solid #2e2e2e"><span class="th" style="left:6.5px">In...</span><span class="th" style="left:40px">X</span><span class="th" style="left:107px">Y</span><span class="th" style="left:173.5px">Arc Angl...</span><span class="vs" style="left:32.6px"></span><span class="vs" style="left:99.8px"></span><span class="vs" style="left:166.2px"></span><span class="vs" style="left:233.4px"></span></div><div class="row sel" style="top:19.3px"><span class="cell" style="left:17.5px">0</span><span class="cell" style="left:44.5px">896.5mil</span><span class="cell" style="left:111.5px">3279.2...</span><span class="cs" style="left:32.6px"></span><span class="cs" style="left:99.8px"></span><span class="cs" style="left:166.2px"></span></div><div class="row" style="top:39.3px"><span class="cell" style="left:17.5px">1</span><span class="cell" style="left:44.5px">440.7mil</span><span class="cell" style="left:111.5px">3279.2...</span><span class="cs" style="left:32.6px"></span><span class="cs" style="left:99.8px"></span><span class="cs" style="left:166.2px"></span></div><div class="row" style="top:59.3px"><span class="cell" style="left:17.5px">2</span><span class="cell" style="left:44.5px">411.9mil</span><span class="cell" style="left:111.5px">3308mil</span><span class="cs" style="left:32.6px"></span><span class="cs" style="left:99.8px"></span><span class="cs" style="left:166.2px"></span></div><div class="row" style="top:79.3px"><span class="cell" style="left:17.5px">3</span><span class="cell" style="left:44.5px">411.9mil</span><span class="cell" style="left:111.5px">3861.4...</span><span class="cs" style="left:32.6px"></span><span class="cs" style="left:99.8px"></span><span class="cs" style="left:166.2px"></span></div><div class="row" style="top:99.3px"><span class="cell" style="left:17.5px"></span><span class="cell" style="left:44.5px"></span><span class="cell" style="left:111.5px"></span><span class="cs" style="left:32.6px"></span><span class="cs" style="left:99.8px"></span><span class="cs" style="left:166.2px"></span></div><div style="position:absolute;left:233.4px;top:19.3px;width:15.6px;height:87px;background:#3c3c3c"></div><svg style="position:absolute;left:237px;top:25px" width="9" height="6" viewBox="0 0 9 6"><path d="M0.5 5.5 L4.5 0.5 L8.5 5.5 Z" fill="#8a8a8a"/></svg><div style="position:absolute;left:238.5px;top:36px;width:5.5px;height:31px;border-radius:3px;background:#8a8a8a"></div><svg style="position:absolute;left:237px;top:94px" width="9" height="6" viewBox="0 0 9 6"><path d="M0.5 0.5 L8.5 0.5 L4.5 5.5 Z" fill="#8a8a8a"/></svg><div style="position:absolute;left:0;top:106px;width:248px;height:33px;background:#474747;border-top:1px solid #2e2e2e"></div></div>
<div class="btn" style="left:818.5px;width:74px;font-size:11.5px">Add</div>
<div class="btn" style="left:898px;width:29.5px"><svg width="11" height="13" viewBox="0 0 11 13" style="position:absolute;left:8.5px;top:4px"><path d="M3.5 0.5 h4 v1.5 h3 v1.6 h-10 v-1.6 h3 Z M1.3 4.4 h8.4 l-0.6 8.1 h-7.2 Z" fill="#f4f4f4"/><path d="M3.8 5.6 v5.6 M5.5 5.6 v5.6 M7.2 5.6 v5.6" stroke="#505050" stroke-width="0.9"/></svg></div>
<div class="abs" style="left:936.9px;top:121px;width:6.3px;height:666px;border-radius:3px;background:#686868"></div>
<svg class="abs" style="left:936px;top:791px" width="9" height="6" viewBox="0 0 9 6"><path d="M0.5 0.5 L8.5 0.5 L4.5 5.5 Z" fill="#777"/></svg>
</body></html>
